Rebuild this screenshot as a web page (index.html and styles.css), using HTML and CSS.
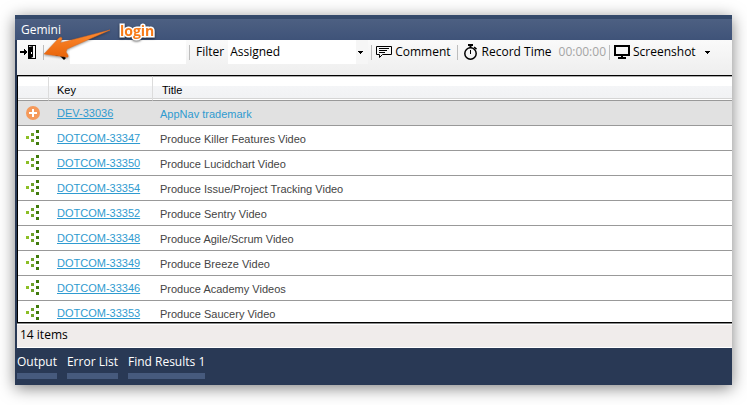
FILE: index.html
```html
<!DOCTYPE html>
<html lang="en">
<head>
<meta charset="utf-8">
<title>Gemini</title>
<link rel="stylesheet" href="styles.css">
</head>
<body>
<svg class="defs" width="0" height="0" aria-hidden="true">
  <symbol id="task" viewBox="0 0 14 15">
    <path fill="#8cbf26" d="M0 6h3v3H0z"/>
    <path fill="#6ba128" d="M5 3h3v3H5zM5 9h3v3H5z"/>
    <path fill="#3f7a0c" d="M10 0h3v3h-3zM10 6h3v3h-3zM10 12h3v3h-3z"/>
  </symbol>
</svg>
<main class="window">
  <h1 class="titlebar">Gemini</h1>
  <div class="toolbar">
    <button class="tool login" aria-label="Login">
      <svg width="16" height="14" viewBox="0 0 16 14"><path d="M0 6h4V4h1v1h1v1h1v2H6v1H5v1H4V8H0z"/><path d="M8 0h8v14H8v-1h7V1H8z"/><path d="M8 0h1v14H8zM9 2l4-1v11l-4 2z"/><path fill="#fff" d="M11 7h1v2h-1z"/></svg>
    </button>
    <span class="sep"></span>
    <label class="search-label" for="search" aria-label="Search">
      <svg width="14" height="14" viewBox="0 0 14 14"><circle cx="6" cy="6" r="3" fill="none" stroke="#000" stroke-width="2"/><path d="M8 10l2-2 4 4-2 2z"/></svg>
    </label>
    <input id="search" class="search" type="text">
    <span class="sep"></span>
    <label class="filter-label" for="filter">Filter</label>
    <div class="filter-box">
      <select id="filter" class="filter"><option>Assigned</option></select>
      <svg class="caret" width="5" height="3" viewBox="0 0 5 3"><path d="M0 0h5v1H4v1H3v1H2V2H1V1H0z"/></svg>
    </div>
    <span class="sep"></span>
    <button class="tool comment">
      <svg width="16" height="13" viewBox="0 0 16 13"><path fill="none" stroke="#000" d="M.5.5h15v8H6.500L3.500 11.500V8.500h-3z"/><path d="M3 2h10v1H3zM3 4h8v1H3zM3 6h6v1H3z"/></svg>
      Comment
    </button>
    <span class="sep"></span>
    <button class="tool record">
      <svg width="14" height="16" viewBox="0 0 14 16"><circle cx="6.500" cy="9.500" r="5.700" fill="none" stroke="#000" stroke-width="1.500"/><path d="M4 0h5v2H7.500v2h-2V2H4zM6 6h1v4H6zM10.500 2.500l2.500 2-1 1.200-2.300-2z"/></svg>
      Record Time
    </button>
    <span class="timer">00:00:00</span>
    <span class="sep"></span>
    <button class="tool shot">
      <svg width="16" height="14" viewBox="0 0 16 14"><path fill="none" stroke="#000" stroke-width="2" d="M1 1h14v9H1z"/><path d="M7 11h2v1h3v2H4v-2h3z"/></svg>
      Screenshot
      <svg class="menu-caret" width="5" height="3" viewBox="0 0 5 3"><path d="M0 0h5v1H4v1H3v1H2V2H1V1H0z"/></svg>
    </button>
  </div>
  <div class="grid-pane">
    <table class="items">
      <thead><tr><th class="col-icon"></th><th class="col-key">Key</th><th>Title</th></tr></thead>
      <tbody>
        <tr class="selected"><td><svg width="14" height="14" viewBox="0 0 14 14"><circle cx="7" cy="7" r="7" fill="#f5995a"/><path fill="#fff" d="M6 3h2v3h3v2H8v3H6V8H3V6h3z"/></svg></td><td><a href="#">DEV-33036</a></td><td>AppNav trademark</td></tr>
        <tr><td><svg width="14" height="15"><use href="#task"/></svg></td><td><a href="#">DOTCOM-33347</a></td><td>Produce Killer Features Video</td></tr>
        <tr><td><svg width="14" height="15"><use href="#task"/></svg></td><td><a href="#">DOTCOM-33350</a></td><td>Produce Lucidchart Video</td></tr>
        <tr><td><svg width="14" height="15"><use href="#task"/></svg></td><td><a href="#">DOTCOM-33354</a></td><td>Produce Issue/Project Tracking Video</td></tr>
        <tr><td><svg width="14" height="15"><use href="#task"/></svg></td><td><a href="#">DOTCOM-33352</a></td><td>Produce Sentry Video</td></tr>
        <tr><td><svg width="14" height="15"><use href="#task"/></svg></td><td><a href="#">DOTCOM-33348</a></td><td>Produce Agile/Scrum Video</td></tr>
        <tr><td><svg width="14" height="15"><use href="#task"/></svg></td><td><a href="#">DOTCOM-33349</a></td><td>Produce Breeze Video</td></tr>
        <tr><td><svg width="14" height="15"><use href="#task"/></svg></td><td><a href="#">DOTCOM-33346</a></td><td>Produce Academy Videos</td></tr>
        <tr><td><svg width="14" height="15"><use href="#task"/></svg></td><td><a href="#">DOTCOM-33353</a></td><td>Produce Saucery Video</td></tr>
      </tbody>
    </table>
  </div>
  <div class="status">14 items</div>
  <nav class="docks">
    <button class="dock">Output</button>
    <button class="dock">Error List</button>
    <button class="dock">Find Results 1</button>
  </nav>
  <svg class="arrow" width="72" height="36" viewBox="0 0 72 36">
    <defs><linearGradient id="orange" x1="0" y1="0" x2="0" y2="1"><stop offset="0" stop-color="#ff8d33"/><stop offset="1" stop-color="#e8640a"/></linearGradient></defs>
    <path fill="url(#orange)" stroke="#e06a1c" stroke-width=".5" d="M1 25L16 9Q19 7 19 10L17 14 67 1 24 20 23 23 25 26Q26 29 23 28Z"/>
  </svg>
  <span class="callout">login</span>
</main>
</body>
</html>
```
FILE: styles.css
```css
* { box-sizing: border-box; }

body {
  margin: 0;
  height: 100vh;
  padding: 15px 15px 20px;
  background: #fff;
  font: 12px/16px "Open Sans", "Noto Sans", sans-serif;
  color: #000;
}

button, input, select {
  margin: 0;
  padding: 0;
  border: 0;
  font: inherit;
  color: inherit;
  background: none;
}

.defs { position: absolute; }

.window {
  position: relative;
  display: flex;
  flex-direction: column;
  height: 100%;
  background: #293955;
  box-shadow: 0 3px 15px rgba(0, 0, 0, .5);
}

.titlebar {
  margin: 0;
  padding: 3px 6px 2px;
  border-top: 4px solid #34496a;
  background: linear-gradient(#4d6082, #3f5379);
  font-size: 12px;
  font-weight: 400;
  line-height: 16px;
  color: #fff;
}

.toolbar {
  display: flex;
  align-items: flex-start;
  height: 35px;
  margin-left: 2px;
  padding-left: 3px;
  background: linear-gradient(#fafafa, #eee);
}

.tool {
  display: flex;
  align-items: center;
  gap: 3px;
  height: 24px;
  white-space: nowrap;
}

.login { width: 20px; }

.sep {
  width: 1px;
  height: 15px;
  margin: 5px 4px 0 3px;
  background: #bdbdbd;
}

.search-label { margin: 6px 4px 0; }
.search-label svg { display: block; }

.search {
  width: 116px;
  height: 24px;
  background: #fff;
}

.filter-label { margin: 4px 4px 0 2px; }

.filter-box {
  position: relative;
  width: 140px;
}

.filter {
  display: block;
  width: 100%;
  height: 24px;
  padding-left: 2px;
  appearance: none;
  background: linear-gradient(90deg, #fff 128px, #f6f6f6 128px);
}

.caret {
  position: absolute;
  right: 5px;
  top: 11px;
}

.comment { margin-right: 3px; }
.record { gap: 4px; margin-left: 2px; }
.timer { margin: 4px 0 0 7px; color: #a5a5a5; }
.menu-caret { margin-left: 6px; }

.grid-pane {
  flex: 1;
  min-height: 0;
  margin-left: 2px;
  overflow: hidden;
  background: #fff;
  border: solid #000;
  border-width: 1px 0 1px 1px;
}

.items {
  width: 100%;
  border-collapse: separate;
  border-spacing: 0;
  table-layout: fixed;
  font: 11px/14px "Liberation Sans", Arial, sans-serif;
  color: #444;
}

.items th {
  height: 25px;
  padding: 2px 0 0 9px;
  border-top: 1px solid #aaa;
  border-bottom: 1px solid #999;
  border-right: 1px solid #dcdcdc;
  background: linear-gradient(#fff 9px, #f4f5f7 9px, #f1f2f4 21px, #d5d5d5 21px, #d5d5d5 22px, #fff 22px);
  font-weight: 400;
  text-align: left;
  color: #000;
}

.items th:last-child { border-right: 0; }
.items .col-icon { width: 31px; }
.items .col-key { width: 104px; padding-left: 8px; }

.items td {
  height: 25px;
  padding: 2px 0 0 7px;
  border-bottom: 1px solid #999;
}

.items td:nth-child(2) { padding: 0 0 0 8px; }
.items td:first-child { padding: 0 0 2px 8px; }
.items td svg { display: block; }
.items a { color: #2f9bd0; text-underline-offset: 1px; }
.items .selected td { background: #e1e1e1; color: #2f9bd0; }
.items .selected td:first-child { padding-bottom: 0; }

.status {
  height: 25px;
  margin-left: 2px;
  padding: 3px;
  border-top: 1px solid #888;
  border-bottom: 1px solid #fff;
  box-shadow: inset 0 1px #fff;
  background: #f0eceb;
}

.docks {
  display: flex;
  gap: 10px;
  height: 37px;
  padding: 6px 2px;
}

.dock {
  height: 25px;
  padding-bottom: 3px;
  border-bottom: 6px solid #465a7d;
  color: #fff;
}

.arrow {
  position: absolute;
  left: 28px;
  top: 14px;
  filter: drop-shadow(0 1px 1px rgba(0, 0, 0, .4));
}

.callout {
  position: absolute;
  left: 105px;
  top: 7px;
  font: 700 14px/18px "Open Sans", sans-serif;
  color: #f87a16;
  -webkit-text-stroke: 3px #fff;
  paint-order: stroke fill;
  filter: drop-shadow(0 1px 1px rgba(0, 0, 0, .6));
}
```
